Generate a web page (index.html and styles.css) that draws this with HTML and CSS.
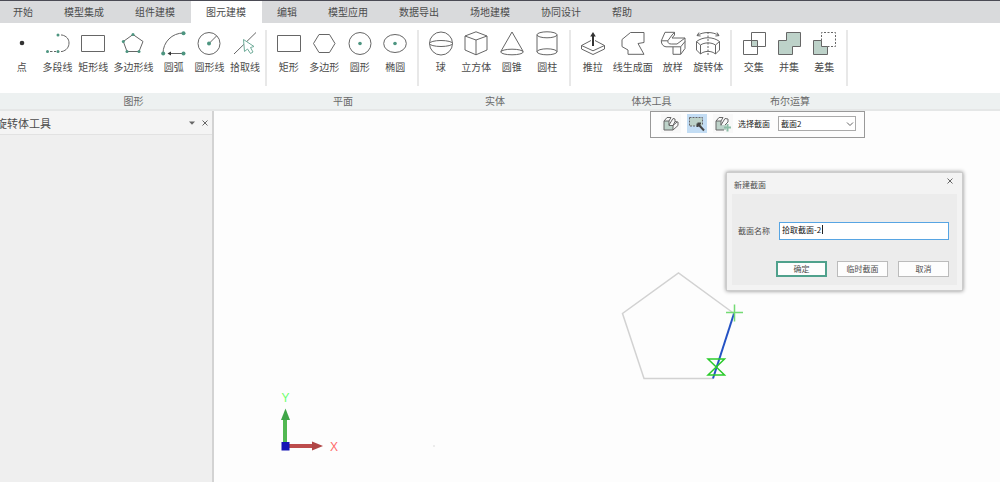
FILE: index.html
```html
<!DOCTYPE html>
<html lang="zh-CN">
<head>
<meta charset="utf-8">
<title>图元建模</title>
<link rel="stylesheet" href="styles.css">
</head>
<body>
<div class="app">
  <nav class="tabs">
    <button class="tab">开始</button>
    <button class="tab">模型集成</button>
    <button class="tab">组件建模</button>
    <button class="tab active">图元建模</button>
    <button class="tab">编辑</button>
    <button class="tab">模型应用</button>
    <button class="tab">数据导出</button>
    <button class="tab">场地建模</button>
    <button class="tab">协同设计</button>
    <button class="tab">帮助</button>
  </nav>

  <div class="ribbon">
    <section class="group lines">
      <div class="tools">
        <button class="tool"><svg class="icon" viewBox="0 0 26 26"><circle class="ink" cx="13" cy="13" r="2.3"/></svg>点</button>
        <button class="tool"><svg class="icon" viewBox="0 0 26 26"><path d="M16 5h1c4.500 1 7 4 7 8s-2.500 7.500-7 8.500h-1"/><path d="M5 21.500h6" stroke-dasharray="2.500 1.500"/><g class="node"><circle cx="13" cy="5" r="1.500"/><circle cx="2.500" cy="21.500" r="1.500"/><circle cx="13" cy="21.500" r="1.500"/></g></svg>多段线</button>
        <button class="tool"><svg class="icon" viewBox="0 0 26 26"><path d="M1.500 5.500h23v16h-23z"/></svg>矩形线</button>
        <button class="tool wide"><svg class="icon" viewBox="0 0 26 26"><path d="M13 4.500L3.300 11.500 7 21.500h12l4-10z"/><g class="node"><circle cx="13" cy="4.500" r="1.500"/><circle cx="3.300" cy="11.500" r="1.500"/><circle cx="7" cy="21.500" r="1.500"/><circle cx="19" cy="21.500" r="1.500"/></g></svg>多边形线</button>
        <button class="tool"><svg class="icon" viewBox="0 0 26 26"><path d="M2 23.500C2 12 11 3 22.500 3M8 23.500h13"/><path class="ink" d="M6.500 23.500l3.500-2v4z"/><g class="node"><circle cx="22.500" cy="3.300" r="2"/><circle cx="2.200" cy="23.500" r="2"/><circle cx="22.500" cy="23.500" r="2"/></g></svg>圆弧</button>
        <button class="tool"><svg class="icon" viewBox="0 0 26 26"><circle cx="13" cy="13.500" r="11"/><path d="M13 13.500l7.500-7.500"/><g class="node"><circle cx="13" cy="13.500" r="2"/></g></svg>圆形线</button>
        <button class="tool"><svg class="icon" viewBox="0 0 26 26"><path d="M2 24L24 2.500"/><path class="cursor" d="M11.500 9.500l1 12 3-2.500 3 4.500 2.500-1.500-2.500-4.500 3.500-1z"/></svg>拾取线</button>
      </div>
      <h2>图形</h2>
    </section>
    <section class="group shapes">
      <div class="tools">
        <button class="tool"><svg class="icon" viewBox="0 0 26 26"><path d="M1.500 5.500h23v16h-23z"/></svg>矩形</button>
        <button class="tool"><svg class="icon" viewBox="0 0 26 26"><path d="M2.500 13.500l5.500-9h10.500l5.500 9-5.500 9H8z"/></svg>多边形</button>
        <button class="tool"><svg class="icon" viewBox="0 0 26 26"><circle cx="13" cy="13.500" r="11"/><g class="node"><circle cx="13" cy="13.500" r="1.800"/></g></svg>圆形</button>
        <button class="tool"><svg class="icon" viewBox="0 0 26 26"><ellipse cx="13" cy="13.500" rx="11.300" ry="9"/><g class="node"><circle cx="13" cy="13.500" r="1.800"/></g></svg>椭圆</button>
      </div>
      <h2>平面</h2>
    </section>
    <section class="group shapes">
      <div class="tools">
        <button class="tool"><svg class="icon" viewBox="0 0 26 26"><circle cx="13" cy="13.500" r="11.500"/><ellipse cx="13" cy="13.500" rx="11.500" ry="3"/></svg>球</button>
        <button class="tool"><svg class="icon" viewBox="0 0 26 26"><path d="M13 1.800L2 6v14l11 4.800L24 20V6zM2 6l11 4 11-4M13 10v14.800"/></svg>立方体</button>
        <button class="tool"><svg class="icon" viewBox="0 0 26 26"><path d="M1.800 21.500L13 2l11.200 19.500"/><ellipse cx="13" cy="22" rx="11.200" ry="2.800"/></svg>圆锥</button>
        <button class="tool"><svg class="icon" viewBox="0 0 26 26"><ellipse cx="13" cy="4.800" rx="10" ry="3"/><ellipse cx="13" cy="21.800" rx="10" ry="3"/><path d="M3 4.800v17M23 4.800v17"/></svg>圆柱</button>
      </div>
      <h2>实体</h2>
    </section>
    <section class="group solids">
      <div class="tools">
        <button class="tool"><svg class="icon" viewBox="0 0 26 26"><path d="M11 10.500L1.500 15.500 13 20.800l11.500-5.300L15 10.500M1.500 15.500v3.500L13 24.500 24.500 19v-3.500"/><path class="bold" d="M13 16V4"/><path class="ink" d="M13 2l2.800 4.500h-5.600z"/></svg>推拉</button>
        <button class="tool wide"><svg class="icon" viewBox="0 0 26 26"><path d="M10.500 2.500H24v10l-6 1 6 10.800H8V20l-6-3.400V9.500z"/></svg>线生成面</button>
        <button class="tool"><svg class="icon" viewBox="0 0 26 26"><path d="M5 2.300h9.500V5L12 8h13v10.500l-4.300 5.800H13v-7.500H6c-3-.3-4.700-2.800-4.700-6zM1.300 10.800h6.500L12 5l2.500-2.700M7.800 10.800c0 2.500 1.200 3.200 3.700 3.200H17l8-6M13 16.800h7.700L25 11.500M20.700 16.800v7.500"/></svg>放样</button>
        <button class="tool"><svg class="icon" viewBox="0 0 26 26"><path d="M2 5.600C8 1.500 18 1.500 24 5.600M4 2.500l-2 3.100 3.600.4M22 2.500l2 3.100-3.600.4M1.500 11.500C8 6.500 18 6.500 24.500 11.500L20.500 15c-4-2.800-11-2.800-15 0zM1.500 11.500V20l4 4v-9M24.500 11.500V20l-4 4v-9M5.500 24c4-3.500 11-3.500 15 0"/><path d="M13 2v23" stroke-dasharray="2 1.500"/></svg>旋转体</button>
      </div>
      <h2>体块工具</h2>
    </section>
    <section class="group booleans">
      <div class="tools">
        <button class="tool"><svg class="icon" viewBox="0 0 26 26"><path class="fill" d="M10.500 10.500h6v6h-6z"/><path d="M10.500 2.500h14v14h-14zM2.500 10.500h14v14h-14z"/></svg>交集</button>
        <button class="tool"><svg class="icon" viewBox="0 0 26 26"><path class="fill" d="M10.500 2.500h14v14h-8v8h-14v-14h8z"/><path d="M10.500 2.500h14v14h-8v8h-14v-14h8z"/></svg>并集</button>
        <button class="tool"><svg class="icon" viewBox="0 0 26 26"><path class="fill" d="M2.500 10.500h8v6h6v8h-14z"/><path d="M10.500 10.500h-8v14h14v-8h-6z"/><path d="M10.500 10.500v-8h14v14h-8" stroke-dasharray="2 1.500"/></svg>差集</button>
      </div>
      <h2>布尔运算</h2>
    </section>
    <div class="rest"></div>
  </div>

  <main class="work">
    <aside class="panel">
      <header class="panel-head">
        <h1>旋转体工具</h1>
        <button class="mini" aria-label="菜单"><svg width="8" height="8" viewBox="0 0 8 8"><path class="solid" d="M1 2.500h6L4 5.800z"/></svg></button>
        <button class="mini" aria-label="关闭面板"><svg width="8" height="8" viewBox="0 0 8 8"><path d="M1.500 1.500l5 5M6.500 1.500l-5 5"/></svg></button>
      </header>
    </aside>

    <div class="canvas">
      <svg class="scene" width="786" height="372" viewBox="0 0 786 372">
        <path class="outline" d="M520 203.500L464.500 163 408.500 203.500 430 268.500H499"/>
        <path class="edge" d="M520 203.500L499 268.500"/>
        <path class="snap" d="M520.500 194.500v17M512 202.500h17"/>
        <path class="mark" d="M494 249h16.500L494 265h16.500z"/>
        <path class="y-axis" d="M71 335v-26"/>
        <path class="y-head" d="M71.500 298.500l4.500 11.500h-9z"/>
        <path class="x-axis" d="M72 336h30"/>
        <path class="x-head" d="M109 336l-11-4.500v9z"/>
        <path class="origin" d="M67.500 332h8v8.500h-8z"/>
        <text class="y-name" x="71.500" y="292">Y</text>
        <text class="x-name" x="120" y="340.500">X</text>
        <circle class="speck" cx="220" cy="336" r="0.700"/>
      </svg>

      <div class="section-bar">
        <button class="pick" aria-label="截面体"><svg width="16" height="16" viewBox="0 0 16 16"><path class="fill" d="M1 5h5v4h4v5H1z"/><path d="M1 5l3-3.500h4L6 5v4.500h4M1 5v9h9V9.500L14 6M1 5h5M10 14l5-4.500V6l-3-.5M6 9l4-6.500 2 .5v2.500L10 9.500"/></svg></button>
        <button class="pick on" aria-label="框选截面"><svg width="16" height="16" viewBox="0 0 16 16"><path class="fill" d="M1 2h12v8H1z"/><path d="M.500 1.500h13v8M.500 1.500v8.500h7" stroke-dasharray="2 1"/><path class="bold" d="M9 8l6 6.500M8.500 7.500v3.500M8.500 7.500H12"/></svg></button>
        <button class="pick" aria-label="添加截面"><svg width="16" height="16" viewBox="0 0 16 16"><path class="fill" d="M1 5h5v4h5v5H1z"/><path d="M1 5l3-3.500h4L6 5v4.500M1 5v9h8M1 5h5M6 9l4-6.500 3 .5v3L10 9"/><path class="plus" d="M12.500 8v7.500M9 11.500h7"/></svg></button>
        <label for="section">选择截面</label>
        <span class="combo">
          <select id="section"><option>截面2</option></select>
          <svg width="8" height="8" viewBox="0 0 8 8"><path d="M1 2.500L4 5.500 7 2.500"/></svg>
        </span>
      </div>

      <form class="dialog" role="dialog" aria-labelledby="dialog-title">
        <header class="dialog-head">
          <h2 id="dialog-title">新建截面</h2>
          <button type="button" class="mini" aria-label="关闭"><svg width="8" height="8" viewBox="0 0 8 8"><path d="M1.500 1.500l5 5M6.500 1.500l-5 5"/></svg></button>
        </header>
        <div class="dialog-body">
          <div class="field">
            <label for="name">截面名称</label>
            <span class="entry"><input id="name" type="text" value="拾取截面-2"><i class="caret"></i></span>
          </div>
          <div class="actions">
            <button type="button" class="action primary">确定</button>
            <button type="button" class="action">临时截面</button>
            <button type="button" class="action">取消</button>
          </div>
        </div>
      </form>
    </div>
  </main>
</div>
</body>
</html>
```

FILE: styles.css
```css
* { box-sizing: border-box; }

body {
  margin: 0;
  background: #fdfdfd;
  color: #4c4c4c;
  font: 10px/14px "Noto Sans CJK SC", sans-serif;
}

button, input, select {
  margin: 0;
  padding: 0;
  border: 0;
  border-radius: 0;
  background: none;
  color: inherit;
  font: inherit;
}

h1, h2 { margin: 0; font-size: 10px; font-weight: 400; }
svg { display: block; fill: none; stroke: #666; }

.app { display: flex; flex-direction: column; min-height: 100vh; }

.tabs {
  display: flex;
  height: 23px;
  border-top: 1px solid #4b4b55;
  background: #d9dadc;
}
.tab { padding: 0 16px 0 15px; white-space: nowrap; }
.tab:first-child { padding-left: 13px; }
.tab.active { background: #fff; }

.ribbon {
  display: flex;
  height: 88px;
  border-bottom: 2px solid #e5e7e7;
  background: #fff;
}
.group { display: flex; flex-direction: column; flex: none; }
.lines { width: 267px; }
.shapes { width: 152px; }
.solids { width: 161px; }
.booleans { width: 116px; }
.rest { flex: 1; align-self: flex-end; height: 16px; background: #edf1f1; }
.tools {
  display: flex;
  height: 56px;
  margin: 7px 0;
  padding: 0 4px;
  border-right: 2px solid #e8e8e8;
}
.lines .tools { padding-right: 2px; }
.tool {
  display: flex;
  flex: 4 0 0;
  flex-direction: column;
  align-items: center;
  gap: 4px;
  min-width: 0;
  white-space: nowrap;
}
.tool.wide { flex-grow: 5; }
.icon { width: 26px; height: 26px; flex: none; }
.group h2 {
  height: 16px;
  background: #edf1f1;
  line-height: 16px;
  text-align: center;
  color: #6a6a6a;
}
.ink { fill: #333; stroke: none; }
.node { fill: #4d9580; stroke: none; }
.fill { fill: #bdd2c9; stroke: none; }
.bold { stroke: #333; stroke-width: 2; }
.plus { stroke: #8dbda7; stroke-width: 2; }
.cursor { fill: #fff; stroke: #6fac99; }

.work { display: flex; flex: 1; }
.panel { width: 214px; border-right: 2px solid #d3d3d3; background: #efefef; }
.panel-head {
  display: flex;
  align-items: center;
  gap: 5px;
  height: 24px;
  padding-right: 3px;
  border-bottom: 1px solid #e2e2e2;
  background: #f4f4f4;
}
.panel-head h1 { flex: 1; margin-left: -4px; font-size: 11px; line-height: 16px; }
.mini { display: grid; place-items: center; width: 8px; height: 12px; }
.mini .solid { fill: #666; stroke: none; }

.canvas { position: relative; flex: 1; overflow: hidden; background: #fdfdfd; }
.scene { position: absolute; top: -1px; left: 0; }
.outline { stroke: #d2d2d2; stroke-width: 1.500; }
.edge { stroke: #2452c4; stroke-width: 2; }
.snap { stroke: #74db74; stroke-width: 1.500; }
.mark { stroke: #2bcb2b; stroke-width: 1.500; }
.y-axis { stroke: #52b852; stroke-width: 4; }
.y-head { fill: #3fa548; stroke: none; }
.x-axis { stroke: #bd4c4c; stroke-width: 4; }
.x-head { fill: #b04545; stroke: none; }
.origin { fill: #1515b5; stroke: none; }
.speck { fill: #ccc; stroke: none; }
.scene text { font: 12px "Liberation Sans", sans-serif; text-anchor: middle; }
.y-name { fill: #6eff6e; stroke: none; }
.x-name { fill: #ff6a6a; stroke: none; }

.section-bar {
  position: absolute;
  top: 0;
  left: 436px;
  display: flex;
  align-items: center;
  width: 215px;
  height: 27px;
  padding: 0 8px 2px 10px;
  border: 1px solid #999;
  background: #fdfdfd;
  color: #222;
  font-size: 8px;
}
.pick {
  display: grid;
  place-items: center;
  width: 20px;
  height: 19px;
  margin-right: 6px;
  background: #f8f8f8;
}
.pick.on { background: #c3ddf4; }
.pick .bold { stroke: #444; }
.section-bar label { margin-left: -1px; white-space: nowrap; }
.combo { position: relative; flex: 1; margin-left: 8px; }
.combo select {
  display: block;
  width: 100%;
  height: 15px;
  padding: 0 2px;
  border: 1px solid #aaa;
  background: #fff;
  line-height: 12px;
  appearance: none;
}
.combo svg { position: absolute; top: 4px; right: 2px; pointer-events: none; }

.dialog {
  position: absolute;
  top: 61px;
  left: 512px;
  width: 237px;
  padding: 0 5px 5px;
  border: 1px solid #ccc;
  background: #f3f3f3;
  box-shadow: 0 0 4px #888;
  font-size: 8px;
}
.dialog-head {
  display: flex;
  justify-content: space-between;
  height: 21px;
  padding: 2px 3px 0 2px;
}
.dialog-head h2 { padding-top: 3px; font-size: 8px; }
.dialog-body { padding: 28px 8px 8px 6px; background: #ececec; }
.field { display: flex; align-items: center; justify-content: space-between; }
.entry { position: relative; width: 170px; }
.entry input {
  display: block;
  width: 100%;
  height: 18px;
  padding: 0 2px 3px;
  border: 1px solid #57a5e3;
  background: #fff;
  color: #111;
  line-height: 12px;
}
.caret { position: absolute; top: 3px; left: 43px; width: 1px; height: 9px; background: #222; }
.actions { display: flex; justify-content: flex-end; gap: 10px; margin-top: 21px; }
.action {
  width: 51px;
  height: 16px;
  border: 1px solid #bbb;
  background: #fdfdfd;
  line-height: 12px;
}
.action.primary { border: 2px solid #4fa18c; line-height: 10px; }
```
